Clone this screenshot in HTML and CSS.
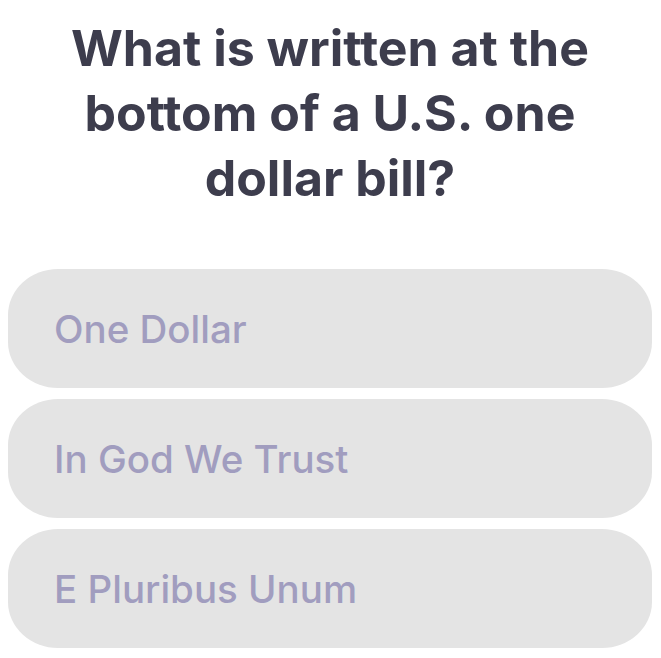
FILE: index.html
```html
<!DOCTYPE html>
<html lang="en">
<head>
<meta charset="utf-8">
<link rel="stylesheet" href="styles.css">
</head>
<body>
<main class="quiz">
  <h1 class="question">What is written at the bottom of a U.S. one dollar bill?</h1>
  <div class="options">
    <button class="option">One Dollar</button>
    <button class="option">In God We Trust</button>
    <button class="option">E Pluribus Unum</button>
  </div>
</main>
</body>
</html>
```
FILE: styles.css
```css
html, body {
  margin: 0;
  padding: 0;
  background: #ffffff;
}
.quiz {
  padding: 16px 9px 0 8px;
  font-family: Inter, "Noto Sans", sans-serif;
}
.question {
  margin: 0 auto;
  width: 580px;
  text-align: center;
  font-size: 50px;
  line-height: 65px;
  font-weight: 700;
  color: #3d3d4d;
}
.options {
  display: flex;
  flex-direction: column;
  gap: 11px;
  margin-top: 58px;
}
.option {
  display: flex;
  align-items: center;
  height: 119px;
  padding: 0 0 0 46px;
  border: none;
  border-radius: 50px / 46px;
  background: #e4e4e4;
  color: #a19dbf;
  font-family: inherit;
  font-size: 38.5px;
  font-weight: 500;
  text-align: left;
}
```
